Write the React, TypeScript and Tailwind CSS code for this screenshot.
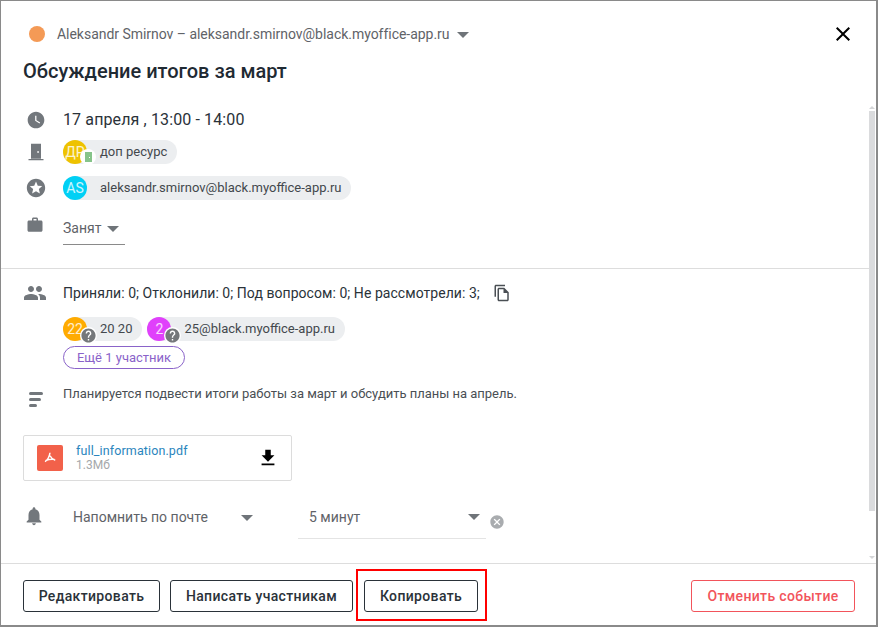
import React from 'react';

const ICONS = {
  clock: 'M12 2C6.5 2 2 6.5 2 12s4.5 10 10 10 10-4.5 10-10S17.5 2 12 2zm4.2 14.2L11 13V7h1.5v5.2l4.5 2.7-.8 1.3z',
  door: 'M6 2h12v18H6V2zm7.500 9v2h2v-2h-2zM3 20.500h18V22H3v-1.500z',
  star: 'M12 2C6.48 2 2 6.48 2 12s4.48 10 10 10 10-4.48 10-10S17.52 2 12 2zm4.24 16L12 15.45 7.77 18l1.12-4.81-3.73-3.23 4.92-.42L12 5l1.92 4.53 4.92.42-3.73 3.23L16.23 18z',
  work: 'M20 6h-4V4c0-1.11-.89-2-2-2h-4c-1.11 0-2 .89-2 2v2H4c-1.11 0-1.99.89-1.99 2L2 19c0 1.11.89 2 2 2h16c1.11 0 2-.89 2-2V8c0-1.11-.89-2-2-2zm-6 0h-4V4h4v2z',
  people: 'M16 11c1.66 0 2.99-1.34 2.99-3S17.66 5 16 5c-1.66 0-3 1.34-3 3s1.34 3 3 3zm-8 0c1.66 0 2.99-1.34 2.99-3S9.66 5 8 5C6.34 5 5 6.34 5 8s1.34 3 3 3zm0 2c-2.33 0-7 1.17-7 3.5V19h14v-2.5c0-2.33-4.67-3.5-7-3.5zm8 0c-.29 0-.62.02-.97.05 1.16.84 1.97 1.97 1.97 3.45V19h6v-2.5c0-2.33-4.67-3.5-7-3.5z',
  copy: 'M16 1H4c-1.1 0-2 .9-2 2v14h2V3h12V1zm-1 4l6 6v10c0 1.1-.9 2-2 2H7.99C6.89 23 6 22.1 6 21l.01-14c0-1.1.89-2 1.99-2h7zM8 7v14h11V12h-5V7H8z',
  bell: 'M12 22c1.1 0 2-.9 2-2h-4c0 1.1.89 2 2 2zm6-6v-5c0-3.07-1.64-5.64-4.5-6.32V4c0-.83-.67-1.5-1.5-1.5s-1.5.67-1.5 1.5v.68C7.63 5.36 6 7.92 6 11v5l-2 2v1h16v-1l-2-2z',
  download: 'M19 9h-4V3H9v6H5l7 7 7-7zM5 18v2h14v-2H5z',
  close: 'M19 6.41L17.59 5 12 10.59 6.41 5 5 6.41 10.59 12 5 17.59 6.41 19 12 13.41 17.59 19 19 17.59 13.41 12z',
  cancel: 'M12 2C6.47 2 2 6.47 2 12s4.47 10 10 10 10-4.47 10-10S17.53 2 12 2zm5 13.59L15.59 17 12 13.41 8.41 17 7 15.59 10.59 12 7 8.41 8.41 7 12 10.59 15.59 7 17 8.41 13.41 12 17 15.59z',
  help: 'M12 2C6.48 2 2 6.48 2 12s4.48 10 10 10 10-4.48 10-10S17.52 2 12 2zm1 17h-2v-2h2v2zm2.07-7.75l-.9.92C13.45 12.9 13 13.5 13 15h-2v-.5c0-1.1.45-2.1 1.17-2.83l1.24-1.26c.37-.36.59-.86.59-1.41 0-1.1-.9-2-2-2s-2 .9-2 2H8c0-2.21 1.79-4 4-4s4 1.79 4 4c0 .88-.36 1.68-.93 2.25z',
};

function Icon({ name, className }: { name: keyof typeof ICONS; className: string }) {
  return (
    <svg viewBox="0 0 24 24" fill="currentColor" fillRule="evenodd" className={className}>
      <path d={ICONS[name]} />
    </svg>
  );
}

function Caret({ className = '' }: { className?: string }) {
  return <span className={`h-0 w-0 border-x-[6px] border-t-[6px] border-x-transparent border-t-[#6f7479] ${className}`} />;
}

function Chip({ initials, color, label, badge }: { initials: string; color: string; label: string; badge?: 'room' | 'help' }) {
  return (
    <div className="flex h-6 items-center rounded-full bg-[#eceef0] pr-[10px]">
      <div className="relative mr-[13px] h-6 w-6 shrink-0">
        <div className={`flex h-6 w-6 items-center justify-center rounded-full text-sm text-white/80 ${color}`}>{initials}</div>
        {badge === 'room' && (
          <div className="absolute left-[17px] top-[9px] flex h-4 w-4 items-center justify-center rounded-full bg-white">
            <div className="relative h-[10px] w-[7px] bg-[#86c48a]">
              <div className="absolute left-1 top-[5px] h-px w-px bg-white" />
            </div>
          </div>
        )}
        {badge === 'help' && (
          <div className="absolute left-[17px] top-[10px] flex h-[17px] w-[17px] items-center justify-center rounded-full bg-white">
            <Icon name="help" className="h-[17px] w-[17px] text-[#75787b]" />
          </div>
        )}
      </div>
      <span className="text-[13px] text-[#43484d]">{label}</span>
    </div>
  );
}

function FooterButton({ children, className }: { children: React.ReactNode; className: string }) {
  return (
    <button className={`flex h-8 items-center justify-center rounded-[3px] border border-[#2a3239] text-sm font-medium tracking-[0.35px] text-[#2a3239] ${className}`}>
      {children}
    </button>
  );
}

export default function App() {
  return (
    <div className="flex h-[627px] w-[878px] flex-col border-2 border-l-[1px] border-t-[1px] border-[#8a8a8a] bg-white font-['Roboto',sans-serif]">
      {/* шапка */}
      <div className="h-[101px] shrink-0 pl-[22px] pr-6">
        <div className="flex h-[66px] items-center justify-between">
          <div className="flex items-center">
            <div className="ml-[6px] h-4 w-4 rounded-full bg-[#f49a56]" />
            <span className="ml-[12px] text-sm tracking-[-0.03px] text-[#5f6368]">
              Aleksandr Smirnov – aleksandr.smirnov@black.myoffice-app.ru
            </span>
            <Caret className="ml-[7px] mt-0.5" />
          </div>
          <Icon name="close" className="-mr-[3px] h-6 w-6 text-black" />
        </div>
        <h1 className="-mt-[8px] text-xl font-medium leading-6 text-[#1f2a33]">Обсуждение итогов за март</h1>
      </div>

      <div className="flex min-h-0 flex-1">
        <div className="min-w-0 flex-1">
          {/* время, ресурс, организатор */}
          <div className="h-[167px] border-b border-[#dddddd] pl-[25px]">
            <div className="flex h-[36px] items-center">
              <Icon name="clock" className="h-5 w-5 text-[#72777c]" />
              <span className="ml-[17px] text-base tracking-[0.12px] text-[#2a3239]">17 апреля , 13:00 - 14:00</span>
            </div>
            <div className="mt-[2px] flex h-6 items-center">
              <Icon name="door" className="h-5 w-5 text-[#72777c]" />
              <div className="ml-[17px]">
                <Chip initials="ДР" color="bg-[#eec200]" label="доп ресурс" badge="room" />
              </div>
            </div>
            <div className="mt-3 flex h-6 items-center">
              <Icon name="star" className="-ml-px h-[22px] w-[22px] text-[#72777c]" />
              <div className="ml-4">
                <Chip initials="AS" color="bg-[#00d0f5]" label="aleksandr.smirnov@black.myoffice-app.ru" />
              </div>
            </div>
            <div className="mt-[15px] flex items-start">
              <Icon name="work" className="mt-px h-[18px] w-[18px] text-[#72777c]" />
              <div className="ml-[19px] flex h-[30px] w-[62px] items-center justify-between border-b border-[#8a8a8a] pb-[4px] pr-[6px]">
                <span className="text-sm text-[#5f6368]">Занят</span>
                <Caret className="mt-0.5" />
              </div>
            </div>
          </div>

          {/* участники */}
          <div className="pl-[22px]">
            <div className="flex h-[48px] items-center">
              <Icon name="people" className="h-6 w-6 text-[#72777c]" />
              <span className="ml-[16px] text-sm tracking-[0.05px] text-[#2a3239]">
                Приняли: 0; Отклонили: 0; Под вопросом: 0; Не рассмотрели: 3;
              </span>
              <Icon name="copy" className="ml-[13px] h-[18px] w-[18px] text-[#4a4f54]" />
            </div>
            <div className="ml-[40px] flex gap-[5px]">
              <Chip initials="22" color="bg-[#ffab00]" label="20 20" badge="help" />
              <Chip initials="2" color="bg-[#e040fb]" label="25@black.myoffice-app.ru" badge="help" />
            </div>
            <button className="ml-[40px] mt-[5px] flex h-[23px] w-[122px] items-center justify-center rounded-full border border-[#8a63c9] text-[13px] text-[#8a63c9]">
              Ещё 1 участник
            </button>
            <div className="mt-[15px] flex items-start">
              <div className="ml-[6px] mt-[8px] flex w-[14px] flex-col gap-[3px]">
                <div className="h-[3px] w-[14px] rounded-full bg-[#72777c]" />
                <div className="h-[3px] w-[12px] rounded-full bg-[#72777c]" />
                <div className="h-[3px] w-[8px] rounded-full bg-[#72777c]" />
              </div>
              <p className="ml-5 text-[13px] leading-[20px] tracking-[-0.015px] text-[#4a4f54]">
                Планируется подвести итоги работы за март и обсудить планы на апрель.
              </p>
            </div>

            {/* вложение */}
            <div className="mt-[28px] flex h-[46px] w-[269px] items-center rounded-[2px] border border-[#dcdcdc] pl-[13px] pr-3">
              <div className="flex h-[26px] w-[26px] items-center justify-center rounded-[2px] bg-[#f2614a]">
                <svg viewBox="0 0 24 24" className="h-[18px] w-[18px]" fill="none" stroke="white" strokeWidth="2">
                  <path d="M12 5c-.6 4-3 9-6.5 12M12 9c1.5 3 3.5 5 7 6M6 15.5c4-1.5 8-2 12-1.500" />
                </svg>
              </div>
              <div className="ml-[13px] flex-1">
                <div className="text-[12.5px] leading-[15px] tracking-[0.12px] text-[#2a85bd]">full_information.pdf</div>
                <div className="text-xs leading-[15px] text-[#a5a8ab]">1.3Мб</div>
              </div>
              <Icon name="download" className="-mt-px h-[22px] w-[22px] text-black" />
            </div>

            {/* напоминание */}
            <div className="mt-[13px] flex items-start">
              <Icon name="bell" className="mt-[11px] h-[22px] w-[22px] text-[#72777c]" />
              <div className="ml-[28px] flex h-[45px] w-[168px] items-center pt-[1px]">
                <span className="text-sm text-[#5f6368]">Напомнить по почте</span>
              </div>
              <Caret className="mt-[21px]" />
              <div className="ml-[45px] flex h-[45px] w-[188px] items-center justify-between border-b border-[#e4e4e4] pl-[11px] pr-[6px] pt-[2px]">
                <span className="text-sm text-[#5f6368]">5 минут</span>
                <Caret className="-mt-px" />
              </div>
              <Icon name="cancel" className="ml-[3px] mt-[20px] h-4 w-4 text-[#a9acaf]" />
            </div>
          </div>
        </div>

        {/* полоса прокрутки */}
        <div className="mr-[1px] flex w-[6px] shrink-0 flex-col items-center pt-[4px]">
          <div className="h-0 w-0 border-x-[3px] border-b-[3px] border-x-transparent border-b-[#d4d5d7]" />
          <div className="mt-[2px] h-[400px] w-full bg-[#dadbdd]" />
          <div className="flex-1" />
          <div className="mb-[4px] h-0 w-0 border-x-[3px] border-t-[3px] border-x-transparent border-t-[#d4d5d7]" />
        </div>
      </div>

      {/* кнопки */}
      <div className="flex h-[62px] shrink-0 items-center border-t border-[#dddddd] pl-[22px] pr-[21px] pt-[2px]">
        <FooterButton className="w-[137px]">Редактировать</FooterButton>
        <FooterButton className="ml-[10px] w-[183px]">Написать участникам</FooterButton>
        <div className="relative ml-[11px]">
          <FooterButton className="w-[114px]">Копировать</FooterButton>
          <div className="absolute -bottom-[9px] -left-[8px] -right-[9px] -top-[11px] border-2 border-[#ff0000]" />
        </div>
        <button className="ml-auto flex h-8 w-[164px] items-center justify-center rounded-[3px] border border-[#f2545b] text-sm font-medium tracking-[0.35px] text-[#f2545b]">
          Отменить событие
        </button>
      </div>
    </div>
  );
}
